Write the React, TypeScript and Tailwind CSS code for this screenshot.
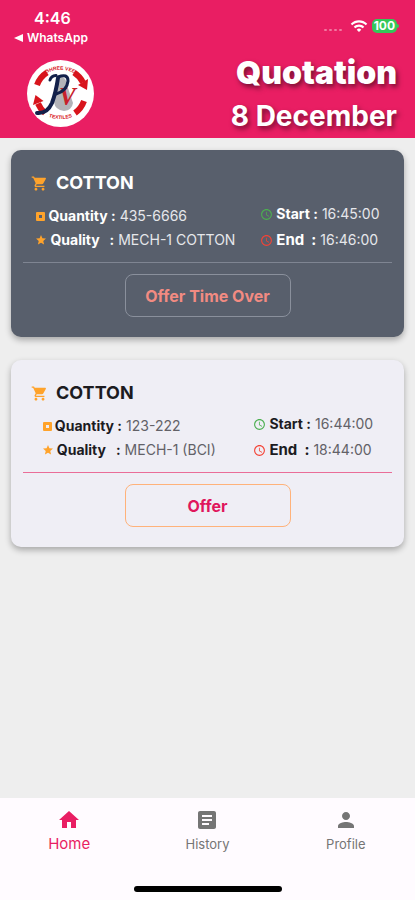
import type { ComponentType, ReactNode } from 'react';
import {
  MdAccessTime,
  MdArticle,
  MdHome,
  MdPerson,
  MdShoppingCart,
  MdStar,
  MdWifi,
} from 'react-icons/md';

interface Quotation {
  id: number;
  name: string;
  quantity: string;
  quality: string;
  start: string;
  end: string;
  isOver: boolean;
}

const quotations: Quotation[] = [
  {
    id: 1,
    name: 'COTTON',
    quantity: '435-6666',
    quality: 'MECH-1 COTTON',
    start: '16:45:00',
    end: '16:46:00',
    isOver: true,
  },
  {
    id: 2,
    name: 'COTTON',
    quantity: '123-222',
    quality: 'MECH-1 (BCI)',
    start: '16:44:00',
    end: '18:44:00',
    isOver: false,
  },
];

function Logo() {
  return (
    <svg viewBox="0 0 67 67" className="h-[67px] w-[67px]" role="img" aria-label="PV logo">
      <defs>
        <path id="logo-top" d="M 18 14 A 30 30 0 0 1 49 14" />
        <path id="logo-bottom" d="M 17 55 A 36 36 0 0 0 50 55" />
      </defs>
      <circle cx="33.5" cy="33.5" r="33.5" fill="#fff" />

      {/* Ring of arrows */}
      <g fill="none" stroke="#d8141c" strokeWidth="6">
        <path d="M 10 25 A 25 25 0 0 1 20 12.500" />
        <path d="M 47 12.500 A 25 25 0 0 1 56 22.500" />
        <path d="M 57 41 A 25 25 0 0 1 48 53" />
        <path d="M 18 53 A 25 25 0 0 1 11 43.500" />
      </g>
      <path d="M 61 19 L 60 30 L 51 25 Z" fill="#d8141c" />
      <path d="M 6 45 L 8.500 35 L 16.500 41 Z" fill="#d8141c" />

      <g fill="#d8141c" fontFamily="Liberation Sans" fontWeight="700" fontSize="5" textAnchor="middle">
        <text>
          <textPath href="#logo-top" startOffset="50%">SHREE VEE</textPath>
        </text>
        <text>
          <textPath href="#logo-bottom" startOffset="50%">TEXTILES</textPath>
        </text>
      </g>

      {/* Monogram */}
      <path d="M 33 17 Q 39 16 40 25 L 46 43 Q 45 50 37 51 Q 28 50 27 42 Z" fill="#b3b3b8" />
      <text x="32" y="45" fill="#c8202b" fontFamily="Liberation Serif" fontStyle="italic" fontWeight="700" fontSize="25">
        V
      </text>
      <g fill="none" stroke="#13204a" strokeLinecap="round" strokeLinejoin="round">
        <path d="M 23 20 Q 24 16 29 15.500" strokeWidth="3" />
        <path d="M 31 18 Q 29 32 25 43 Q 20 54 10 53" strokeWidth="4" />
        <path d="M 31 17 Q 41 13 41 21 Q 40 31 29 34" strokeWidth="3" />
      </g>
    </svg>
  );
}

function StatusBar() {
  return (
    <div className="flex justify-between pl-3.5 pr-4 text-white">
      <div>
        <p className="pl-5 text-base leading-5 font-semibold">4:46</p>
        <a href="#whatsapp" className="flex items-center gap-1 text-xs leading-5 font-semibold">
          <svg viewBox="0 0 9 8" className="h-2 w-[9px]" fill="currentColor" aria-hidden="true">
            <path d="M 0 4 L 9 0 V 8 Z" />
          </svg>
          WhatsApp
        </a>
      </div>
      <div className="flex h-9 items-center gap-1">
        <div className="flex gap-[2px] pt-2 pr-1">
          {[0, 1, 2, 3].map((dot) => (
            <span key={dot} className="h-[2px] w-[3px] rounded-full bg-white/40" />
          ))}
        </div>
        <MdWifi className="size-[18px]" />
        <div className="flex items-center">
          <span className="rounded-[5px] bg-[#34c759] px-[2px] text-xs leading-[14px] font-bold">100</span>
          <span className="h-1 w-[2px] rounded-r-full bg-[#34c759]" />
        </div>
      </div>
    </div>
  );
}

function Header() {
  return (
    <header className="bg-[#e91e63] pt-2">
      <StatusBar />
      <div className="flex items-start justify-between pr-[18px] pl-[27px]">
        <div className="pt-3">
          <Logo />
        </div>
        <div className="pt-1 text-right text-white [text-shadow:2px_3px_5px_rgba(0,0,0,0.5)]">
          <h1 className="text-[32px] leading-[42px] font-black">Quotation</h1>
          <p className="text-[28px] leading-[44px] font-bold">8 December</p>
        </div>
      </div>
    </header>
  );
}

interface DetailProps {
  icon: ReactNode;
  label: string;
  value: string;
  dark: boolean;
  large?: boolean;
}

function Detail({ icon, label, value, dark, large }: DetailProps) {
  return (
    <div className="flex h-6 items-center leading-6">
      {icon}
      <dt
        className={`ml-[3px] font-bold whitespace-pre ${large ? 'text-[15px]' : 'text-[14px]'} ${
          dark ? 'text-white' : 'text-[#1c1b1f]'
        }`}
      >
        {label}
      </dt>
      <dd className={`ml-1 text-[14px] ${dark ? 'text-[#e6e7eb]' : 'text-[#626167]'}`}>{value}</dd>
    </div>
  );
}

function QuantityIcon({ dark }: { dark: boolean }) {
  return (
    <svg viewBox="0 0 9 9" className="ml-[1px] size-[9px]" aria-hidden="true">
      <rect width="9" height="9" rx="1" fill="#ffa32b" />
      <rect x="3" y="3" width="3" height="3" fill={dark ? '#585f6c' : '#efeef5'} />
    </svg>
  );
}

function QuotationCard({ quotation }: { quotation: Quotation }) {
  const dark = quotation.isOver;

  return (
    <article
      className={`rounded-[10px] px-3 py-5 shadow-[0_3px_6px_rgba(0,0,0,0.3)] ${
        dark ? 'bg-[#585f6c]' : 'bg-[#efeef5]'
      }`}
    >
      <div className="flex items-center gap-2 pl-2">
        <MdShoppingCart className="size-[17px] text-[#ffa32b]" />
        <h2 className={`text-[18px] leading-[26px] font-bold ${dark ? 'text-white' : 'text-[#1c1b1f]'}`}>
          {quotation.name}
        </h2>
      </div>

      <dl className="mt-[6px] flex items-end justify-around pb-[10px]">
        <div>
          <Detail
            icon={<QuantityIcon dark={dark} />}
            label="Quantity :"
            value={quotation.quantity}
            dark={dark}
          />
          <Detail
            icon={<MdStar className="size-3 text-[#ffa32b]" />}
            label="Quality   :"
            value={quotation.quality}
            dark={dark}
          />
        </div>
        <div className="flex flex-col gap-[2px]">
          <Detail
            icon={<MdAccessTime className="size-[13px] text-[#4caf50]" />}
            label="Start :"
            value={quotation.start}
            dark={dark}
          />
          <Detail
            icon={<MdAccessTime className="size-[13px] text-[#f44336]" />}
            label="End  :"
            value={quotation.end}
            dark={dark}
            large
          />
        </div>
      </dl>

      <hr className={dark ? 'border-[#7f8592]' : 'border-[#ea6d98]'} />

      <button
        type="button"
        className={`mx-auto mt-[11px] block h-[43px] w-[166px] rounded-[8px] border text-base font-bold ${
          dark ? 'border-[#8a909c] text-[#f28b82]' : 'border-[#ffb27a] text-[#e0165c]'
        }`}
      >
        {dark ? 'Offer Time Over' : 'Offer'}
      </button>
    </article>
  );
}

interface NavItem {
  label: string;
  icon: ComponentType<{ className?: string }>;
  active?: boolean;
}

const navItems: NavItem[] = [
  { label: 'Home', icon: MdHome, active: true },
  { label: 'History', icon: MdArticle },
  { label: 'Profile', icon: MdPerson },
];

function BottomNav() {
  return (
    <nav className="bg-[#fffbff] pt-[10px] pb-2">
      <div className="grid grid-cols-3">
        {navItems.map(({ label, icon: Icon, active }) => (
          <a
            key={label}
            href={`#${label.toLowerCase()}`}
            className={`flex flex-col items-center ${
              active ? 'text-[15px] text-[#e91e63]' : 'text-[13px] text-[#757575]'
            }`}
          >
            <Icon className="size-6" />
            <span className="leading-6">{label}</span>
          </a>
        ))}
      </div>
      <div className="mx-auto mt-[30px] h-[6px] w-[148px] rounded-full bg-black" />
    </nav>
  );
}

export default function App() {
  return (
    <div className="flex min-h-screen flex-col bg-[#eeeeee] font-['Inter',sans-serif]">
      <Header />
      <main className="flex flex-1 flex-col gap-[23px] px-[11px] pt-3">
        {quotations.map((quotation) => (
          <QuotationCard key={quotation.id} quotation={quotation} />
        ))}
      </main>
      <BottomNav />
    </div>
  );
}
